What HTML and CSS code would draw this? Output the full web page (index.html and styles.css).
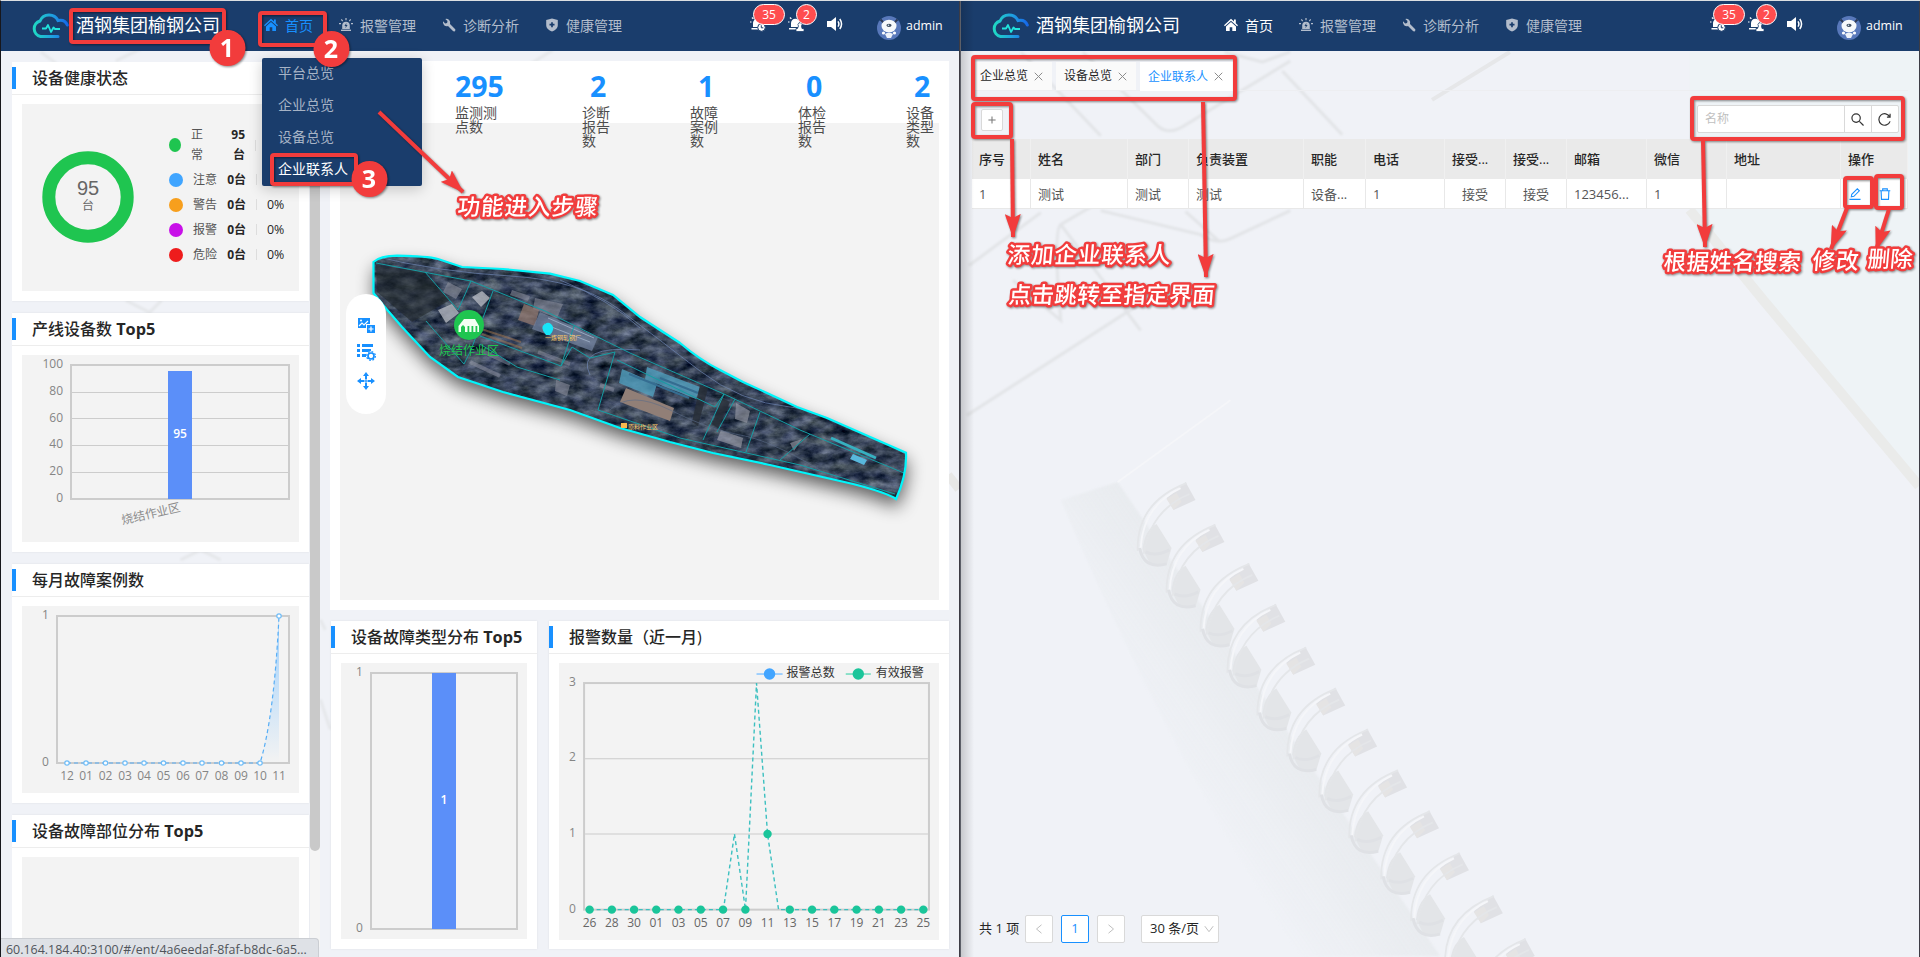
FILE: index.html
```html
<!DOCTYPE html>
<html lang="zh-CN">
<head>
<meta charset="utf-8">
<title>酒钢集团榆钢公司</title>
<link rel="stylesheet" href="styles.css">
</head>
<body>
<svg class="defs" width="0" height="0">
  <defs>
    <linearGradient id="lg" x1="0" y1="0" x2="1" y2="0"><stop offset="0" stop-color="#1fd8c4"/><stop offset=".55" stop-color="#1f9fe0"/><stop offset="1" stop-color="#1668e8"/></linearGradient>
    <symbol id="i-logo" viewBox="0 0 38 28"><path d="M27 24.500H9.500A8 8 0 0 1 9 9 A10 10 0 0 1 27 8.500 Q34 7 36.300 13" fill="none" stroke="url(#lg)" stroke-width="3" stroke-linecap="round"/><path d="M11 16.500h4l2-3.500 3 7 2.500-4.500 1.500 1.500h5" fill="none" stroke="#22e3dc" stroke-width="1.800" stroke-linejoin="round"/></symbol>
    <symbol id="i-home" viewBox="0 0 14 14"><path d="M7 .8 0 7.300l.9.9L7 2.800l6.100 5.400.9-.9-2.200-2V1.500H10v2.100z"/><path d="M7 4 2 8.400V13h3.700V9.300h2.600V13H12V8.400z"/></symbol>
    <symbol id="i-alarm" viewBox="0 0 14 14"><path d="M3.200 11V7.500a3.800 3.800 0 0 1 7.600 0V11z"/><path d="M2 11.600h10V13H2z"/><path d="M7 0v2.300M2.300 1.400l1.400 1.700M11.700 1.400l-1.400 1.700M0 5.600h2M12 5.600h2" stroke="currentColor" stroke-width="1.200"/><path d="m7.400 5-2 3h1.400l-.4 2.300 2.200-3.200H7.200z" fill="#1a3d6c"/></symbol>
    <symbol id="i-wrench" viewBox="0 0 14 14"><path d="M1 3.300 3.200 5.400 5.100 4.900 5.500 3 3.300.9A4 4 0 0 1 8 6l5 5a1.400 1.400 0 0 1-2 2L6 8.100A4 4 0 0 1 1 3.300z"/></symbol>
    <symbol id="i-shield" viewBox="0 0 14 14"><path d="M7 .6 12.800 2v5c0 3.200-2.600 5.300-5.800 6.500C3.800 12.300 1.200 10.200 1.200 7V2z"/><path d="M7 4.200v5M4.500 6.700h5" stroke="#1a3d6c" stroke-width="1.700"/></symbol>
    <symbol id="i-bell1" viewBox="0 0 16 16"><path d="M3 11V7a4.300 4.300 0 0 1 8.600 0v4z"/><path d="M1.500 12h8v1.600h-8zM0 5.500h1.500v1H0zM1.500 2l1-1 1.300 1.600-.9.700z"/><circle cx="11.500" cy="11.500" r="3.800" stroke="#1a3d6c"/><path d="M11.300 9.300v2.500h2" fill="none" stroke="#1a3d6c"/></symbol>
    <symbol id="i-bell2" viewBox="0 0 16 16"><path d="M3 11V7a4.300 4.300 0 0 1 8.600 0v4z"/><path d="M1 12h7v1.600H1zM0 5.500h1.500v1H0zM1.500 2l1-1 1.300 1.600-.9.700z"/><path d="M8 15.500v-3h1.500l1-2.500a2 2 0 1 1 3 0l.5 2.500H16v3z" stroke="#1a3d6c" stroke-width=".8"/></symbol>
    <symbol id="i-speaker" viewBox="0 0 16 14"><path d="M0 4h4l5-4v14l-5-4H0z"/><path d="M11 4.300q1.800 2.700 0 5.400M12.800 2q3.500 5 0 10" fill="none" stroke="currentColor" stroke-width="1.500"/></symbol>
    <symbol id="i-avatar" viewBox="0 0 24 24"><circle cx="12" cy="12" r="12" fill="#5878ba"/><path d="M3.500 3.500 7 7M20.500 3.500 17 7" stroke="#2c3a56" stroke-width="2"/><ellipse cx="12" cy="10" rx="7.500" ry="6.300" fill="#f7f9fb"/><ellipse cx="12" cy="9.300" rx="2.600" ry="1.600" fill="#3d4a5e"/><circle cx="11.500" cy="9.200" r=".8" fill="#d8edf5"/><path d="M8 18q4-3 8 0l-2 4h-4z" fill="#eef2f8"/><circle cx="6.500" cy="17" r="1.600" fill="#fff"/><circle cx="17.500" cy="17" r="1.600" fill="#fff"/></symbol>
    <symbol id="i-x" viewBox="0 0 10 10"><path d="m.8.800 8.400 8.400M9.200.8.800 9.200" stroke="#8c8c8c" stroke-width="1.100"/></symbol>
    <filter id="blur4"><feGaussianBlur stdDeviation="9"/></filter>
    <filter id="soft"><feGaussianBlur stdDeviation="1.200"/></filter>
    <filter id="terrain" x="0" y="0" width="100%" height="100%" color-interpolation-filters="sRGB"><feTurbulence type="fractalNoise" baseFrequency=".06 .11" numOctaves="5" seed="8"/><feColorMatrix values=".62 0 0 0 -.09  .62 0 0 0 -.045  .62 0 .12 0 -.03  0 0 0 0 1"/></filter>
    <clipPath id="site"><path id="outline" d="M373.500 262Q380 256 397 255.700C412 256 430 257 438 259L462 267 503 269 550 273.700 580 281 613 295 640 317 680 343Q700 360 720 370L743 382 767 393 797 407 827 418 877 440 906 452.700Q907 475 896 499 888 493 853 484L770 465 713 453 670 442 620 428 570 410 503 392 458 377 430 357 402 327 383 305 373.500 293Z"/></clipPath>
    <linearGradient id="area" x1="0" y1="0" x2="0" y2="1"><stop offset="0" stop-color="#8fcaff" stop-opacity=".85"/><stop offset="1" stop-color="#8fcaff" stop-opacity="0"/></linearGradient>
    <marker id="head" viewBox="0 0 24 16" refX="23" refY="8" markerWidth="24" markerHeight="16" markerUnits="userSpaceOnUse" orient="auto"><path d="M24 8 0 0 4 8 0 16z" fill="#f23c3c"/></marker>
  </defs>
</svg>

<div class="desktop">
  <section class="window">
    <header class="top">
      <svg class="logo"><use href="#i-logo"/></svg>
      <div class="brand">酒钢集团榆钢公司</div>
      <nav class="nav">
        <a class="hot"><svg><use href="#i-home"/></svg>首页</a>
        <a><svg><use href="#i-alarm"/></svg>报警管理</a>
        <a><svg><use href="#i-wrench"/></svg>诊断分析</a>
        <a><svg><use href="#i-shield"/></svg>健康管理</a>
      </nav>
      <div class="user">
        <span class="bell"><svg><use href="#i-bell1"/></svg><b class="wide">35</b></span>
        <span class="bell"><svg><use href="#i-bell2"/></svg><b>2</b></span>
        <svg class="speaker"><use href="#i-speaker"/></svg>
        <svg class="avatar"><use href="#i-avatar"/></svg>
        <span class="name">admin</span>
      </div>
    </header>
    <main class="dash">
      <svg class="backdrop" viewBox="0 51 960 906" fill="none" stroke="#e5e7ea" stroke-width="3"><path d="M40 51l16 12M115 60l25-12M529 64l24-15M125 300l24 12 12-12M180 560l20-10 20 10M320 700l10 30M325 630l-5-10" filter="url(#soft)"/><path d="M949 475l11 14" stroke="#e7e7e6" stroke-width="9"/></svg>
      <aside class="side">
        <article class="card">
          <h2>设备健康状态</h2>
          <div class="plot health">
            <svg class="donut" viewBox="0 0 92 92"><circle cx="46" cy="46" r="39.200" fill="none" stroke="#1fc550" stroke-width="13"/><text x="46" y="44" class="d-num">95</text><text x="46" y="59" class="d-unit">台</text></svg>
            <ul>
              <li class="tall"><i class="ok"></i><span>正<br>常</span><b>95<br>台</b><em></em></li>
              <li><i class="note"></i><span>注意</span><b>0台</b><em></em></li>
              <li><i class="warn"></i><span>警告</span><b>0台</b><em></em><u>0%</u></li>
              <li><i class="alert"></i><span>报警</span><b>0台</b><em></em><u>0%</u></li>
              <li><i class="danger"></i><span>危险</span><b>0台</b><em></em><u>0%</u></li>
            </ul>
          </div>
        </article>
        <article class="card">
          <h2><span>产线设备数 <b>Top5</b></span></h2>
          <div class="plot"><svg class="chart" viewBox="22 355 277 187">
            <path class="grid" d="M72 392.500H288M72 418.500H288M72 445.500H288M72 472.500H288"/>
            <rect class="frame" x="71" y="365" width="218" height="134"/>
            <rect class="bar" x="168" y="371" width="24" height="128"/>
            <g class="axis end"><text x="63" y="368">100</text><text x="63" y="395">80</text><text x="63" y="422">60</text><text x="63" y="448">40</text><text x="63" y="475">20</text><text x="63" y="502">0</text></g>
            <text class="val" x="180" y="438">95</text>
            <text class="axis-cat" x="181" y="511" transform="rotate(-13 181 511)">烧结作业区</text>
          </svg></div>
        </article>
        <article class="card">
          <h2>每月故障案例数</h2>
          <div class="plot"><svg class="chart" viewBox="22 606 277 187">
            <rect class="frame" x="57" y="616" width="232" height="147"/>
            <path d="M260 763Q274 718 279 616V763Z" fill="url(#area)"/>
            <path d="M67 763H260Q274 718 279 616" fill="none" stroke="#58aef5" stroke-width="1.200" stroke-dasharray="4 3"/>
            <g fill="#fff" stroke="#6fbdf8" stroke-width="1.200"><circle cx="67" cy="763" r="2.200"/><circle cx="86" cy="763" r="2.200"/><circle cx="105.500" cy="763" r="2.200"/><circle cx="125" cy="763" r="2.200"/><circle cx="144" cy="763" r="2.200"/><circle cx="163.500" cy="763" r="2.200"/><circle cx="183" cy="763" r="2.200"/><circle cx="202" cy="763" r="2.200"/><circle cx="221.500" cy="763" r="2.200"/><circle cx="241" cy="763" r="2.200"/><circle cx="260" cy="763" r="2.200"/><circle cx="279" cy="616" r="2.200"/></g>
            <g class="axis mid"><text x="45.500" y="619">1</text><text x="45.500" y="766">0</text><text x="67" y="780">12</text><text x="86" y="780">01</text><text x="105.500" y="780">02</text><text x="125" y="780">03</text><text x="144" y="780">04</text><text x="163.500" y="780">05</text><text x="183" y="780">06</text><text x="202" y="780">07</text><text x="221.500" y="780">08</text><text x="241" y="780">09</text><text x="260" y="780">10</text><text x="279" y="780">11</text></g>
          </svg></div>
        </article>
        <article class="card">
          <h2><span>设备故障部位分布 <b>Top5</b></span></h2>
          <div class="plot"></div>
        </article>
      </aside>
      <div class="scroll"><div class="thumb"></div></div>
      <div class="content">
        <section class="map-card">
          <div class="stats">
            <div class="first"><strong>295</strong><span>监测测点数</span></div>
            <div><strong>2</strong><span>诊断报告数</span></div>
            <div><strong>1</strong><span>故障案例数</span></div>
            <div><strong>0</strong><span>体检报告数</span></div>
            <div><strong>2</strong><span>设备类型数</span></div>
          </div>
          <div class="map">
            <svg viewBox="340 123 599 477">
              <use href="#outline" transform="translate(1 9)" fill="#000" opacity=".62" filter="url(#blur4)"/>
              <g clip-path="url(#site)">
                <rect x="370" y="250" width="540" height="255" fill="#343e50"/>
                <rect x="370" y="250" width="540" height="255" filter="url(#terrain)"/>
                <path d="M376 265 425 272 450 300 412 322 377 292z" fill="#22282c" opacity=".6"/>
                <path d="M438 310l14-6 7 9-13 10zM472 297l10-6 8 7-9 9z" fill="#c4c7cf" opacity=".7"/>
                <path d="M448 282l14 7-6 10-13-7zM512 290l18 6-2 5-18-6zM535 298l28 6-6 14-24-9zM556 380l14 5-3 11-12-5z" fill="#8a8d9b" opacity=".6"/>
                <path d="M524 304l15 6-4 16-17-6z" fill="#96796e" opacity=".7"/>
                <path d="M540 312l58 25-6 14-60-22z" fill="#71819d" opacity=".75"/>
                <path d="M548 318l46 20M544 324l46 18" stroke="#98a8c0" stroke-width="1"/>
                <path d="M478 328l43 14M482 334l40 14" stroke="#a6794f" stroke-width="2" opacity=".5"/>
                <path d="M538 352l32 12M480 350l30 14M600 385l14 5M470 362l30 14" stroke="#9a9cab" stroke-width="4" opacity=".45"/>
                <path d="M622 369l35 15-4 13-34-14zM647 367l53 20-4 12-51-20z" fill="#4f9dbd" opacity=".8"/>
                <path d="M626 388l48 20-4 13-50-19z" fill="#917f77"/>
                <path d="M660 378l38 15M629 374l60 24" stroke="#356d91" stroke-width="2"/>
                <path d="M736 403l14 8-3 12-12-4zM721 430l22 8-2 10-24-8zM790 443l12-4-8 12z" fill="#a0a1ad" opacity=".6"/>
                <path d="M700 385l8 3-10 38-6-4zM722 398l8 4-12 26-6-4z" fill="#272d36" opacity=".8"/>
                <path d="M853 454l14 6-3 5-14-6z" fill="#58b8dc"/><path d="M831 438l45 20" stroke="#36b0c0" stroke-width="3"/>
                <path d="M373 256Q440 272 510 276T620 310 700 371 790 407 905 454M560 280Q610 300 640 328M590 375Q575 345 640 350" fill="none" stroke="#6e84b0" stroke-width="1" opacity=".7"/>
                <path d="M376 263 471 281 545 311 630 353 724 394 800 430 904 473M425 272 458 310M471 281 458 310M493 291 471 350 464 364 426 321M480 336 561 366 574 326M561 366 572 347 590 358 615 352 598 410 680 438 800 465 895 494M480 344 517 367 560 380M617 360 715 407 724 394 703 440M735 399 717 432M760 412 746 452M810 434 780 460" fill="none" stroke="#169da3" stroke-width="1"/>
                <path d="M610 410q20-20 60 0t70 25 80 35" fill="none" stroke="#5c6c88" opacity=".6"/>
              </g>
              <use href="#outline" fill="none" stroke="#00f6fb" stroke-width="2.200"/>
              <path d="M546 335q-7-8-1-11a4.500 4.500 0 0 1 6 0q5 4-1 11z" fill="#18e5f8"/>
              <rect x="621" y="423" width="6" height="5" fill="#f6b74e"/><text x="628" y="429" class="tiny">原料作业区</text><text x="545" y="340" class="tiny">一炼钢轧钢厂</text>
              <circle cx="469" cy="325" r="15" fill="#1fc550"/>
              <path d="M458.500 326 464 319h11l4 7v6h-20.500z" fill="#f2fff3"/><path d="M461 332v-5l2-2 2 2v5M467.500 332v-6h1.800v6M471.500 332v-6h1.800v6M475.500 332v-6h1.800v6" fill="#1fc550"/>
              <text x="439" y="354.500" class="site-name">烧结作业区</text>
            </svg>
            <div class="tools">
              <svg viewBox="0 0 18 18"><path d="M1 1h12v6H9v4H1zM10 8h8v8h-8z"/><path d="m2 9 3-3 2 2 4-4M14 9.500v5M11.500 12h5" stroke="#fff" stroke-width="1.200" fill="none"/><circle cx="4" cy="3.500" r="1" fill="#fff"/></svg>
              <svg viewBox="0 0 18 18"><path d="M0 1h3v3H0zM5 1h11v3H5zM0 6h3v3H0zM5 6h9v3H5zM0 11h3v3H0zM5 11h4v3H5z"/><circle cx="14" cy="13" r="4.800" fill="#fff"/><circle cx="14" cy="13" r="3" fill="none" stroke="currentColor" stroke-width="1.700"/><circle cx="14" cy="13" r="4.400" fill="none" stroke="currentColor" stroke-width="1.200" stroke-dasharray="1.800 1.650"/></svg>
              <svg viewBox="0 0 18 18"><path d="M9 0l3 4h-2v3.500H8V4H6zM9 18l-3-4h2v-3.500h2V14h2zM0 9l4-3v2h3.500v2H4v2zM18 9l-4-3v2h-3.500v2H14v2z"/><circle cx="9" cy="9" r="1"/></svg>
            </div>
          </div>
        </section>
        <div class="bottom">
          <article class="card narrow">
            <h2><span>设备故障类型分布 <b>Top5</b></span></h2>
            <div class="plot"><svg class="chart" viewBox="341 663 186 276">
              <rect class="frame" x="371" y="673" width="146" height="256"/><rect class="bar" x="432" y="673" width="24" height="256"/>
              <g class="axis mid"><text x="359.500" y="676">1</text><text x="359.500" y="932">0</text></g><text class="val" x="444" y="804">1</text>
            </svg></div>
          </article>
          <article class="card">
            <h2>报警数量（近一月)</h2>
            <div class="plot"><svg class="chart" viewBox="559 663 379 276">
              <path class="grid" d="M585 758.500H927M585 833.500H927"/><rect class="frame" x="584" y="683" width="344" height="226"/>
              <path d="M589.500 909H723L734 833.500 745 909 756 683 767 833.500 778 909H922.500" fill="none" stroke="#3cc0c0" stroke-width="1.400" stroke-dasharray="4 3"/>
              <g fill="#1ac59a"><circle cx="589.500" cy="909" r="4.200"/><circle cx="611.700" cy="909" r="4.200"/><circle cx="633.900" cy="909" r="4.200"/><circle cx="656" cy="909" r="4.200"/><circle cx="678.200" cy="909" r="4.200"/><circle cx="700.400" cy="909" r="4.200"/><circle cx="722.600" cy="909" r="4.200"/><circle cx="744.900" cy="909" r="4.200"/><circle cx="767" cy="833.500" r="4.200"/><circle cx="789.200" cy="909" r="4.200"/><circle cx="811.400" cy="909" r="4.200"/><circle cx="833.600" cy="909" r="4.200"/><circle cx="855.800" cy="909" r="4.200"/><circle cx="878" cy="909" r="4.200"/><circle cx="900.200" cy="909" r="4.200"/><circle cx="922.400" cy="909" r="4.200"/></g>
              <g class="axis mid"><text x="572.500" y="686">3</text><text x="572.500" y="761">2</text><text x="572.500" y="837">1</text><text x="572.500" y="912">0</text></g>
              <g class="axis mid dark"><text x="589.500" y="926">26</text><text x="611.700" y="926">28</text><text x="633.900" y="926">30</text><text x="656" y="926">01</text><text x="678.200" y="926">03</text><text x="700.400" y="926">05</text><text x="722.600" y="926">07</text><text x="744.900" y="926">09</text><text x="767" y="926">11</text><text x="789.200" y="926">13</text><text x="811.400" y="926">15</text><text x="833.600" y="926">17</text><text x="855.800" y="926">19</text><text x="878" y="926">21</text><text x="900.200" y="926">23</text><text x="922.400" y="926">25</text></g>
              <path d="M756 674H782" stroke="#85c4ff" stroke-width="1.500"/><circle cx="769" cy="674" r="5.700" fill="#42a5ff"/><path d="M845 674H870" stroke="#6bdabb" stroke-width="1.500"/><circle cx="857.500" cy="674" r="5.700" fill="#1ac59a"/>
              <text class="leg" x="786" y="677">报警总数</text><text class="leg" x="875" y="677">有效报警</text>
            </svg></div>
          </article>
        </div>
      </div>
      <div class="status">60.164.184.40:3100/#/ent/4a6eedaf-8faf-b8dc-6a5...</div>
      <div class="menu"><a>平台总览</a><a>企业总览</a><a>设备总览</a><a class="on">企业联系人</a></div>
    </main>
  </section>

  <section class="window right">
    <header class="top">
      <svg class="logo"><use href="#i-logo"/></svg>
      <div class="brand">酒钢集团榆钢公司</div>
      <nav class="nav">
        <a class="cur"><svg><use href="#i-home"/></svg>首页</a>
        <a><svg><use href="#i-alarm"/></svg>报警管理</a>
        <a><svg><use href="#i-wrench"/></svg>诊断分析</a>
        <a><svg><use href="#i-shield"/></svg>健康管理</a>
      </nav>
      <div class="user">
        <span class="bell"><svg><use href="#i-bell1"/></svg><b class="wide">35</b></span>
        <span class="bell"><svg><use href="#i-bell2"/></svg><b>2</b></span>
        <svg class="speaker"><use href="#i-speaker"/></svg>
        <svg class="avatar"><use href="#i-avatar"/></svg>
        <span class="name">admin</span>
      </div>
    </header>
    <main class="contacts">
      <svg class="backdrop" viewBox="960 51 960 906">
        <defs>
          <linearGradient id="dusk" gradientUnits="userSpaceOnUse" x1="1150" y1="760" x2="1290" y2="665"><stop offset="0" stop-color="#e6eaec" stop-opacity="0"/><stop offset="1" stop-color="#e3e6e9"/></linearGradient>
          <g id="ring"><path d="M-38 53Q-36 34-24 28L-9 52-14 69-30 69z" fill="#e3e5e8"/><path d="M-14 2 5-14 15 4-7 14z" fill="#e0e1e5"/><path d="M-14 3-4-3 1 6-7 14z" fill="#e5e4e4"/><path d="M6-13Q-44 6-43 55M9-2Q-30 14-37 58" fill="none" stroke="#e4e6e9" stroke-width="1.800"/><path d="M0-8Q-38 10-40 53" fill="none" stroke="#f5f6f9" stroke-width="2"/><path d="M-41 52Q-37 74-14 68" fill="none" stroke="#dfe1e5" stroke-width="3"/><path d="M-35 56q10 5 24-2" fill="none" stroke="#dfe1e5" stroke-width="3"/></g>
        </defs>
        <path d="M1690 51H1920V490L1690 208Z" fill="#edf2f5" opacity=".8"/>
        <path d="M1117 482 1440 957H1300Q1170 760 1060 500z" fill="url(#dusk)" opacity=".8" filter="url(#soft)"/>
        <path d="M1117 482 1230 400" stroke="#f5f6f9" stroke-width="2"/>
        <g fill="none" stroke="#e2e4e7" stroke-width="3" filter="url(#soft)"><path d="M1082 51 1158 126Q1168 134 1182 126L1290 60M1282 70 1342 134M1224 51 1262 61 1290 51M1100 210 1200 234Q1216 245 1230 238L1290 210M1012 280 1060 320Q1052 230 1060 224L1135 180M1060 224 1140 330M966 415 1160 290M968 265 1040 212M1020 51 1100 135M1185 211 1218 240"/></g>
        <path d="M1432 99 1510 51" stroke="#e6e7e9" stroke-width="4"/>
        <path d="M1690 209 1765 301 1920 486" fill="none" stroke="#eaebea" stroke-width="10"/>
        <use href="#ring" x="1180" y="496"/><use href="#ring" x="1209" y="538"/><use href="#ring" x="1243" y="577"/><use href="#ring" x="1270" y="618"/><use href="#ring" x="1300" y="661"/><use href="#ring" x="1330" y="702"/><use href="#ring" x="1362" y="743"/><use href="#ring" x="1392" y="784"/><use href="#ring" x="1424" y="825"/><use href="#ring" x="1454" y="867"/><use href="#ring" x="1488" y="910"/><use href="#ring" x="1520" y="953"/>
      </svg>
      <div class="tabs"><a>企业总览<svg><use href="#i-x"/></svg></a><a>设备总览<svg><use href="#i-x"/></svg></a><a class="on">企业联系人<svg><use href="#i-x"/></svg></a></div>
      <div class="bar-row">
        <button class="add"><svg viewBox="0 0 10 10"><path d="M5 .5v9M.5 5h9" stroke="#777" stroke-width="1.300"/></svg></button>
        <div class="search">
          <div class="field">名称</div>
          <button><svg viewBox="0 0 14 14"><circle cx="5.500" cy="5.500" r="4.500"/><path d="m9 9 4.500 4.500"/></svg></button>
          <button><svg viewBox="0 0 14 14"><path d="M12.700 4.200A6.200 6.200 0 1 0 13 9M13 .8v3.600H9.600"/></svg></button>
        </div>
      </div>
      <table>
        <colgroup><col class="w59"><col class="w97"><col class="w61"><col class="w115"><col class="w62"><col class="w79"><col class="w61"><col class="w61"><col class="w80"><col class="w80"><col class="w114"><col class="w67"></colgroup>
        <thead><tr><th>序号</th><th>姓名</th><th>部门</th><th>负责装置</th><th>职能</th><th>电话</th><th>接受...</th><th>接受...</th><th>邮箱</th><th>微信</th><th>地址</th><th>操作</th></tr></thead>
        <tbody><tr><td>1</td><td>测试</td><td>测试</td><td>测试</td><td>设备...</td><td>1</td><td class="c">接受</td><td class="c">接受</td><td>123456...</td><td>1</td><td></td><td><div class="ops"><svg viewBox="0 0 13 13"><path d="M.5 12.300h12M2.500 9.500l.5-2.700L9 .9l2.200 2.200L5.300 9z"/></svg><svg viewBox="0 0 13 13"><path d="M.8 3h11.400M4 3V1h5v2M2.300 3l.4 9.300h7.600l.4-9.300"/></svg></div></td></tr></tbody>
      </table>
      <footer class="pager"><span>共 1 项</span><button><svg viewBox="0 0 8 10"><path d="M6.500.8 1.500 5l5 4.200"/></svg></button><button class="on">1</button><button><svg viewBox="0 0 8 10"><path d="m1.500.8 5 4.200-5 4.200"/></svg></button><div class="size">30 条/页<svg viewBox="0 0 10 8"><path d="m.8 1.200 4.200 5.500 4.200-5.500"/></svg></div></footer>
    </main>
  </section>

  <!-- Callouts over both windows -->
  <svg class="callouts" viewBox="0 0 1920 957">
    <g fill="none" stroke="#f23c3c" stroke-width="4">
      <rect x="71" y="10" width="153" height="32" rx="2"/><rect x="260" y="13" width="65" height="32" rx="2"/><rect x="272" y="155" width="84" height="29" rx="2"/>
      <rect x="973" y="57" width="262" height="42" rx="2"/><rect x="973" y="104" width="38" height="33" rx="2"/><rect x="1692" y="98" width="211" height="41" rx="2"/><rect x="1845" y="178" width="27" height="29" rx="2"/><rect x="1876" y="176" width="26" height="32" rx="2"/>
      <g marker-end="url(#head)"><path d="M379 112 463 192"/><path d="M1012 139 1013 237"/><path d="M1203 102 1206 277"/><path d="M1703 141 1705 247"/><path d="M1847 208 1831 249"/><path d="M1889 209 1876 250"/></g>
    </g>
    <g class="nums"><circle cx="227.500" cy="48" r="18"/><circle cx="331.500" cy="49" r="18"/><circle cx="369.500" cy="179" r="18"/><text x="227" y="57">1</text><text x="331" y="58">2</text><text x="369" y="188">3</text></g>
    <g class="notes">
      <text transform="translate(457 215) skewX(-5)" textLength="140">功能进入步骤</text><text transform="translate(1007 263) skewX(-5)" textLength="163">添加企业联系人</text><text transform="translate(1008 303) skewX(-5)" textLength="206">点击跳转至指定界面</text><text transform="translate(1663 270) skewX(-5)" textLength="137">根据姓名搜索</text><text transform="translate(1812 269) skewX(-5)" textLength="46">修改</text><text transform="translate(1867 267) skewX(-5)" textLength="45">删除</text>
    </g>
  </svg>
</div>
</body>
</html>
```
FILE: styles.css
```css
* { box-sizing: border-box; }
body { margin: 0; font: 14px/1.5 "Open Sans", "Noto Sans CJK SC", sans-serif; color: #262626; overflow: hidden; }
svg { display: block; overflow: visible; }
svg, button { flex: none; }
.defs { position: absolute; }
.desktop { position: relative; display: grid; grid-template-columns: 959px 960px; width: 1920px; height: 957px; border-left: 1px solid #17171c; border-top: 1px solid #dcdfe2; background: #f0f2f7; overflow: hidden; }
.window { position: relative; display: flex; flex-direction: column; height: 956px; border-right: 1px solid #3d3c45; overflow: hidden; }
.window.right { border-left: 1px solid #5c5f68; }
.window.right::before { content: ""; position: absolute; z-index: 2; left: 0; top: 0; width: 13px; height: 956px; background: linear-gradient(90deg, rgba(0,0,0,.17), transparent); }

.top { flex: none; display: flex; align-items: center; height: 50px; padding-left: 31px; background: #1a3d6c; color: #fff; }
.logo { width: 38px; height: 28px; margin-left: -1px; }
.brand { margin: -2px 0 0 7px; width: 144px; font-size: 18px; white-space: nowrap; }
.nav { display: flex; gap: 26px; margin: -2px 0 0 44px; color: #b3bdcc; }
.nav a { display: flex; align-items: center; gap: 7px; white-space: nowrap; }
.nav svg { width: 14px; height: 14px; fill: currentColor; color: inherit; }
.nav .hot { color: #1890ff; }
.nav .cur { color: #fff; }
.user { display: flex; align-items: center; margin-left: auto; padding-right: 17px; line-height: 20px; }
.name { width: 36px; font-size: 12.4px; }
.bell { position: relative; width: 38px; height: 16px; margin-top: -4px; }
.bell svg { width: 16px; height: 16px; fill: #fff; }
.bell b { position: absolute; left: 8px; top: -12px; min-width: 21px; height: 21px; border: 1px solid #fff; border-radius: 11px; background: #ff4d4f; font-size: 12px; line-height: 19px; font-weight: 400; text-align: center; }
.bell .wide { left: 3px; width: 32px; }
.speaker { width: 16px; height: 14px; margin: -4px 34px 0 1px; fill: #fff; color: #fff; }
.avatar { width: 24px; height: 24px; margin: 3px 5px 0 0; }

.dash { position: relative; flex: 1; min-height: 0; display: flex; padding: 11px 10px 0 11px; }
.backdrop { position: absolute; left: 0; top: 0; width: 100%; height: 100%; overflow: hidden; }
.side { position: relative; width: 298px; height: 885px; overflow: hidden; display: flex; flex-direction: column; gap: 12px; }
.card { position: relative; flex: none; display: flex; flex-direction: column; width: 297px; height: 239px; background: #fff; padding-bottom: 10px; box-shadow: 0 0 2px rgba(0,0,0,.08); }
.card h2 { flex: none; display: flex; align-items: center; gap: 16px; height: 33px; margin: 0 0 9px; border-bottom: 1px solid #ededed; font-size: 16px; font-weight: 500; line-height: 30px; white-space: nowrap; }
.card h2 b { font-weight: 700; font-size: 16.3px; }
.card h2::before { content: ""; width: 4px; height: 22px; background: #1890ff; }
.plot { flex: 1; margin: 0 10px; background: #f3f3f3; }
.chart { width: 100%; height: 100%; font-size: 12px; }
.frame { fill: none; stroke: #ccc; stroke-width: 2; }
.grid { stroke: #ccc; }
.bar { fill: #5b8ff9; }
.axis { fill: #858585; }
.axis.dark { fill: #666; }
.end { text-anchor: end; }
.mid { text-anchor: middle; }
.axis-cat { fill: #8c8c8c; text-anchor: end; }
.val { fill: #fff; font-weight: 600; text-anchor: middle; }
.leg { fill: #333; }
.health { display: flex; }
.donut { width: 92px; height: 92px; margin: 47px 0 0 20px; text-anchor: middle; fill: #666; font-family: "Liberation Sans", "Noto Sans CJK SC"; }
.d-num { font-size: 20px; }
.d-unit { font-size: 12px; }
.health ul { margin: 20px 0 0 35px; padding: 0; list-style: none; font-size: 12px; line-height: 20px; }
.health li { display: flex; align-items: center; height: 25px; }
.health .tall { height: 42px; margin-bottom: 1px; }
.health i { width: 14px; height: 14px; border-radius: 50%; }
.health .tall i { width: 12px; margin-right: -1px; }
.ok { background: #1fc550; } .note { background: #40a5ff; } .warn { background: #f79f1d; } .alert { background: #c810e8; } .danger { background: #ee1c1c; }
.health span { width: 26px; margin-left: 10px; color: #555; }
.health .tall span { width: 27px; margin-left: 11px; }
.health b { width: 27px; text-align: right; font-weight: 700; white-space: nowrap; }
.health em { width: 1px; height: 11px; margin: 0 10px; background: #ddd; }
.health u { text-decoration: none; font-size: 12.4px; }
.scroll { position: relative; width: 10px; height: 886px; margin-top: -1px; background: #f5f5f5; }
.thumb { height: 790px; background: #c9c9c9; border-radius: 0 0 5px 5px; }
.content { position: relative; flex: 1; min-width: 0; margin: -1px 0 0 10px; display: flex; flex-direction: column; gap: 11px; }
.map-card { height: 549px; padding: 0 10px 10px; background: #fff; display: flex; flex-direction: column; }
.stats { position: relative; z-index: 1; height: 62px; padding: 6px 0 0 115px; display: flex; }
.stats div { width: 108px; flex: none; }
.stats .first { width: 127px; }
.stats div:last-child { width: 33px; }
.stats strong { display: block; padding-left: 8px; height: 39px; font-size: 28.500px; line-height: 38px; color: #1890ff; font-weight: 700; }
.stats .first strong { padding-left: 0; }
.stats span { display: block; width: 29px; line-height: 14px; color: #4d4d4d; }
.stats .first span { width: 43px; }
.map { position: relative; flex: 1; background: #f3f3f3; }
.map > svg { width: 599px; height: 477px; overflow: hidden; }
.tiny { font-size: 6px; fill: #f6c463; }
.site-name { font-size: 12px; fill: #1fc550; }
.tools { position: absolute; left: 6px; top: 171px; width: 40px; height: 120px; padding-top: 23px; border-radius: 20px; background: #fff; display: flex; flex-direction: column; align-items: center; gap: 8px; color: #1890ff; fill: #1890ff; }
.tools svg { width: 18px; height: 18px; }
.tools svg:last-child { margin-top: 3px; }
.bottom { display: flex; gap: 12px; padding-left: 1px; }
.bottom .card { flex: 1; height: 328px; }
.bottom .narrow { flex: none; width: 206px; }
.status { position: absolute; left: 0; bottom: 0; width: 318px; height: 19px; padding-left: 5px; background: #dee1e6; border: 1px solid #cbced3; border-left: 0; border-bottom: 0; border-radius: 0 4px 0 0; font-size: 12.450px; line-height: 21px; color: #50545a; white-space: nowrap; }
.menu { position: absolute; left: 261px; top: 7px; width: 160px; height: 128px; background: #1a3d6c; box-shadow: 0 3px 14px rgba(0,0,0,.2); border-radius: 2px; color: #a6b3c5; display: flex; flex-direction: column; }
.menu a { height: 32px; padding-left: 16px; line-height: 30px; }
.menu .on { color: #fff; }

.contacts { position: relative; flex: 1; min-height: 0; display: flex; flex-direction: column; padding: 11px 11px 0; }
.tabs { position: relative; display: flex; gap: 4px; height: 29px; border-bottom: 1px solid #edeef1; font-size: 12px; line-height: 28px; }
.tabs a { display: flex; align-items: center; gap: 6px; height: 28px; width: 80px; padding-left: 8px; background: #fafafa; white-space: nowrap; }
.tabs .on { width: 93px; height: 29px; background: #fff; color: #1890ff; }
.tabs svg { width: 9px; height: 9px; }
.bar-row { position: relative; display: flex; justify-content: space-between; height: 48px; padding: 14px 9px 0; }
.add { width: 22px; height: 22px; margin-top: 4px; padding: 6px; border: 1px solid #d9d9d9; border-radius: 2px; background: #fff; }
.add svg { width: 8px; height: 8px; }
.search { display: flex; height: 28px; background: #fff; border: 1px solid #d9d9d9; border-radius: 2px; font-size: 12px; line-height: 26px; }
.field { width: 146px; padding-left: 7px; color: #bfbfbf; }
.search button { width: 27px; padding: 0 6px; border: 0; border-left: 1px solid #d9d9d9; background: none; }
.search svg { width: 13px; height: 13px; fill: none; stroke: #333; stroke-width: 1.3; }
table { position: relative; width: 936px; table-layout: fixed; border-collapse: separate; border-spacing: 0; font-size: 13px; }
.w59 { width: 59px; } .w97 { width: 97px; } .w61 { width: 61px; } .w115 { width: 115px; } .w62 { width: 62px; } .w79 { width: 79px; } .w80 { width: 80px; } .w114 { width: 114px; } .w67 { width: 67px; }
th, td { padding: 0 0 0 7px; text-align: left; border-right: 1px solid #f0f0f0; white-space: nowrap; }
th { height: 40px; background: #eaeaea; font-weight: 500; line-height: 38px; }
td { height: 30px; background: #fff; border-right-color: #e8e8e8; border-bottom: 1px solid #e8e8e8; color: #555; line-height: 28px; }
td.c { padding: 0; text-align: center; }
.ops { display: flex; gap: 18px; padding-left: 1px; }
.ops svg { width: 12px; height: 12px; fill: none; stroke: #1890ff; stroke-width: 1.2; }
.pager { position: relative; display: flex; align-items: center; height: 28px; margin-top: 706px; padding-left: 7px; font-size: 13px; }
.pager span { width: 46px; }
.pager button { width: 28px; height: 28px; margin-right: 8px; padding: 0 9px; background: #fff; border: 1px solid #d9d9d9; border-radius: 2px; font: inherit; }
.pager .on { color: #1890ff; border-color: #1890ff; }
.pager svg { width: 8px; height: 10px; fill: none; stroke: #bfbfbf; }
.size { display: flex; align-items: center; gap: 5px; margin-left: 8px; width: 78px; height: 28px; padding-left: 8px; background: #fff; border: 1px solid #d9d9d9; border-radius: 2px; white-space: nowrap; }
.size svg { width: 10px; height: 8px; }

.callouts { position: absolute; left: -1px; top: -1px; width: 1920px; height: 957px; z-index: 5; filter: drop-shadow(1px 1px 1px rgba(0,0,0,.45)); }
.nums { fill: #f23c3c; text-anchor: middle; font: 700 25px "Open Sans", sans-serif; }
.nums text { fill: #fff; }
.notes { font: 500 22.5px "Noto Sans CJK SC", sans-serif; fill: #fff; stroke: #f23c3c; stroke-width: 5px; stroke-linejoin: round; paint-order: stroke; }
```
